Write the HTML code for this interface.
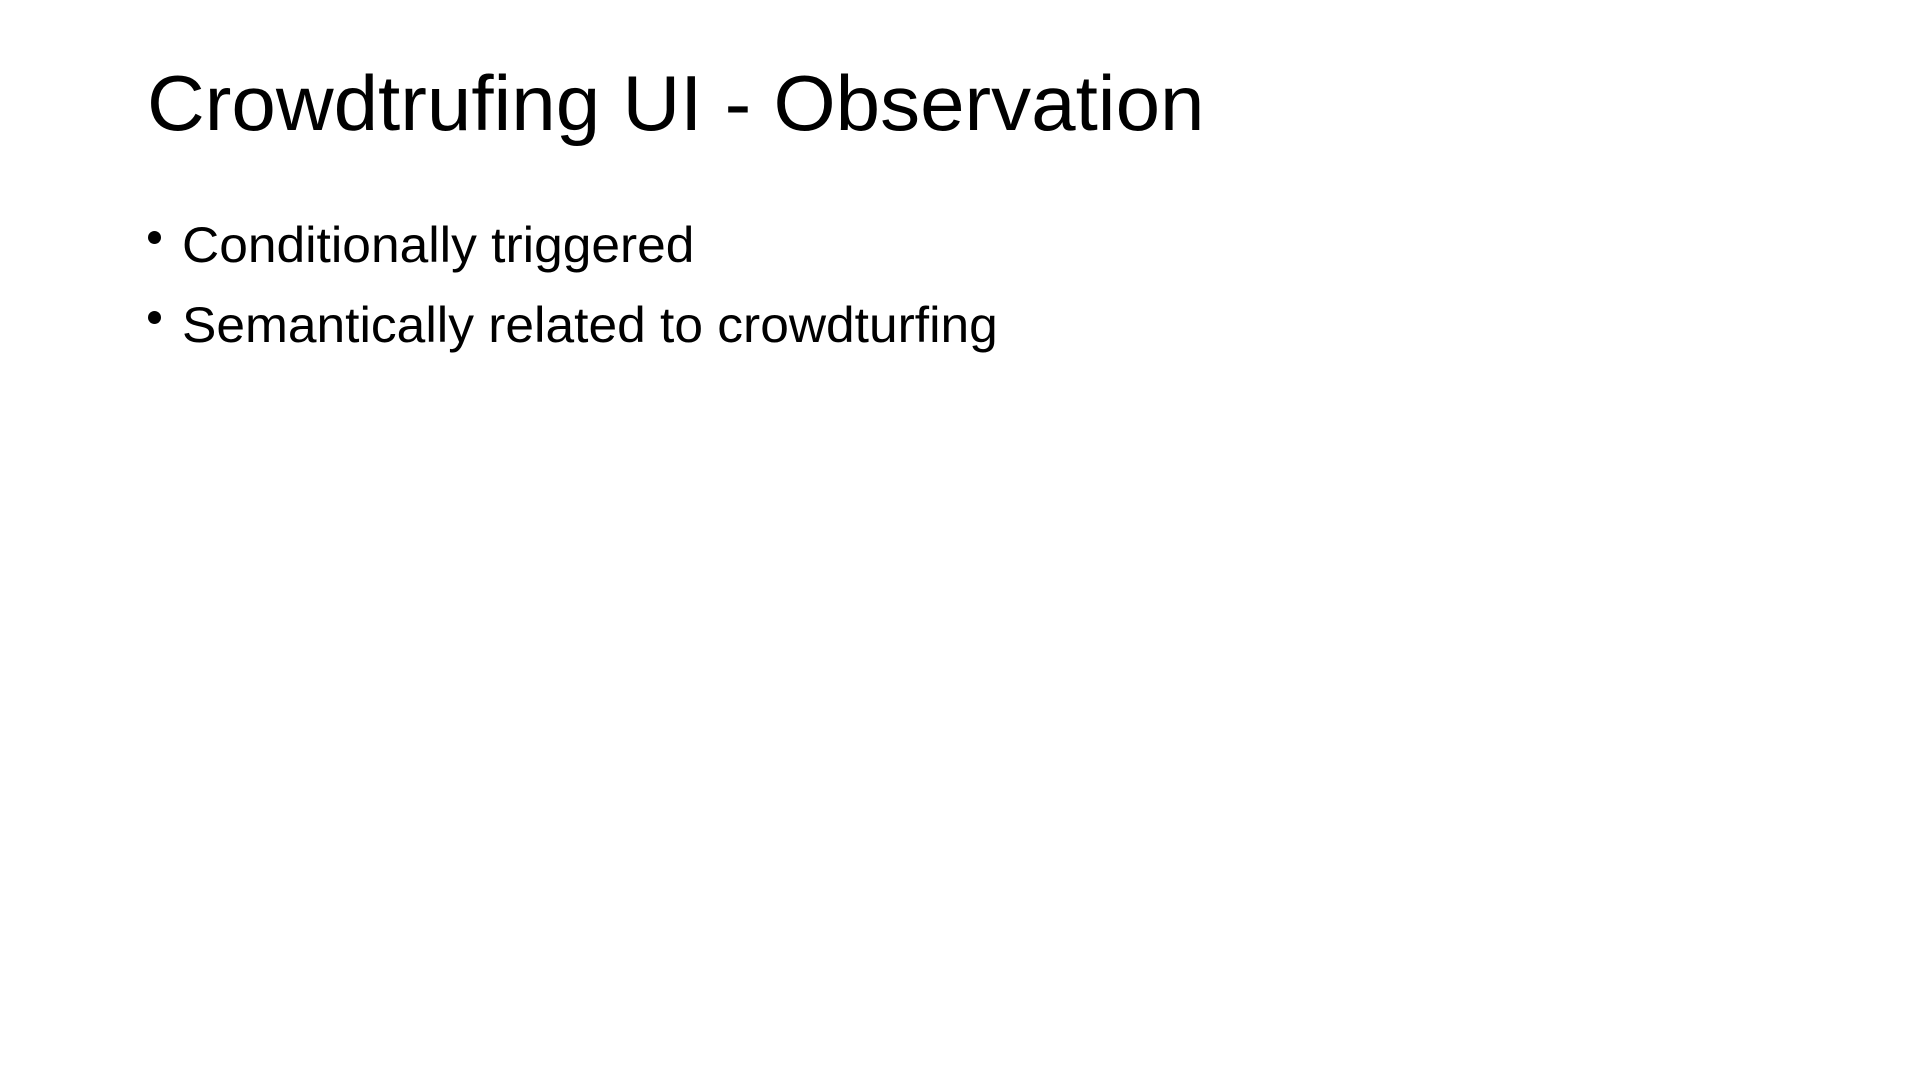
<!DOCTYPE html>
<html>
<head>
<meta charset="utf-8">
<style>
  html,body{margin:0;padding:0;background:#fff;}
  body{width:1920px;height:1080px;position:relative;overflow:hidden;font-family:"Liberation Sans",sans-serif;color:#000;}
  .title{position:absolute;left:147px;top:58px;font-size:78px;line-height:90px;white-space:nowrap;transform:scaleX(1.025);transform-origin:left top;}
  .b{position:absolute;left:182px;font-size:50px;line-height:60px;white-space:nowrap;transform:scaleX(1.03);transform-origin:left top;}
  .dot{position:absolute;left:148px;width:13px;height:13px;border-radius:50%;background:#000;}
</style>
</head>
<body>
  <div class="title">Crowdtrufing UI - Observation</div>
  <div class="dot" style="top:231px"></div>
  <div class="b" style="top:215px">Conditionally triggered</div>
  <div class="dot" style="top:311px"></div>
  <div class="b" style="top:295px">Semantically related to crowdturfing</div>
</body>
</html>
